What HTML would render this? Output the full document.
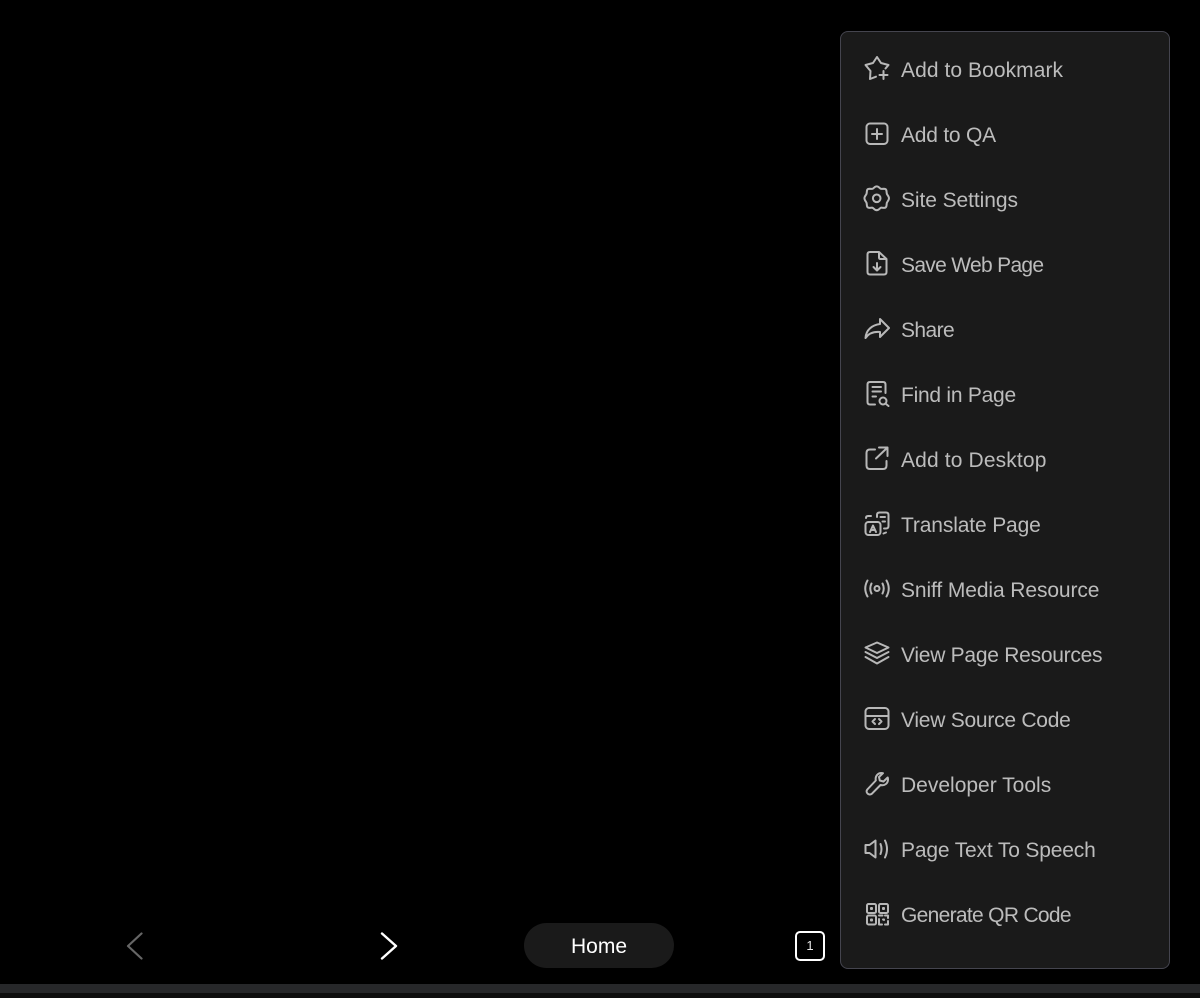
<!DOCTYPE html>
<html>
<head>
<meta charset="utf-8">
<style>
html,body{margin:0;padding:0;background:#000;}
body{position:relative;width:1200px;height:998px;overflow:hidden;font-family:"Liberation Sans",sans-serif;}
.menu{position:absolute;left:840px;top:31px;width:328px;height:936px;background:#1a1a1a;border:1px solid #44444e;border-radius:8px;}
.t{position:absolute;left:901px;color:#bcbcbc;font-size:21px;line-height:28px;height:28px;white-space:nowrap;}
svg.i{position:absolute;left:863px;width:28px;height:28px;fill:none;stroke:#b8b8b8;stroke-width:2;stroke-linecap:round;stroke-linejoin:round;}
.strip{position:absolute;left:0;top:984px;width:1200px;height:9px;background:#27282a;}
.strip2{position:absolute;left:0;top:993px;width:1200px;height:5px;background:#0e0e0e;}
.home{position:absolute;left:524px;top:923px;width:150px;height:45px;border-radius:23px;background:#1a1a1a;color:#fff;font-size:21px;line-height:48px;text-align:center;}
.tab{position:absolute;left:795px;top:931px;width:26px;height:26px;border:2px solid #fff;border-radius:5px;color:#e8e8e8;font-size:13px;line-height:26px;text-align:center;}
</style>
</head>
<body>
<svg style="position:absolute;left:120px;top:928px;width:30px;height:36px" viewBox="0 0 30 36" fill="none" stroke="#666" stroke-width="2.2" stroke-linecap="round" stroke-linejoin="round"><path d="M21.500 5.500 L8 18 L21.500 30.500"/></svg>
<svg style="position:absolute;left:374px;top:928px;width:30px;height:36px" viewBox="0 0 30 36" fill="none" stroke="#fff" stroke-width="2.4" stroke-linecap="round" stroke-linejoin="round"><path d="M8 5.500 L22 18 L8 30.500"/></svg>
<div class="home">Home</div>
<div class="tab">1</div>
<div class="strip"></div>
<div class="strip2"></div>
<div class="menu"></div>

<svg class="i" style="top:54px" viewBox="0 0 28 28"><path d="M13 22.700 L7 25 L7.500 17 L2.500 11 L10 9 L14 3 L18 9 L25.500 11 L22.500 14.500"/><path d="M20.500 17 V25 M16.500 21 H24.500"/></svg>
<div class="t" style="top:57px;letter-spacing:.07px">Add to Bookmark</div>

<svg class="i" style="top:119px" viewBox="0 0 28 28"><rect x="3.500" y="4.500" width="21" height="20.500" rx="3.500"/><path d="M14 10 V20 M9 15 H19"/></svg>
<div class="t" style="top:122px;letter-spacing:-.22px">Add to QA</div>

<svg class="i" style="top:184px" viewBox="0 0 28 28"><path d="M11.600 3.200 Q13.700 1.600 15.800 3.200 L17.200 4.400 Q18 5 19 4.900 L21 4.700 Q23.300 4.700 23.500 7 L23.700 9 Q23.800 10 24.400 10.800 L25.300 12.200 Q26.600 14.300 25.300 16.400 L24.400 17.800 Q23.800 18.600 23.700 19.600 L23.500 21.600 Q23.300 23.900 21 23.900 L19 23.700 Q18 23.600 17.200 24.200 L15.800 25.400 Q13.700 27 11.600 25.400 L10.200 24.200 Q9.400 23.600 8.400 23.700 L6.400 23.900 Q4.100 23.900 3.900 21.600 L3.700 19.600 Q3.600 18.600 3 17.800 L2.100 16.400 Q0.800 14.300 2.100 12.200 L3 10.800 Q3.600 10 3.700 9 L3.900 7 Q4.100 4.700 6.400 4.700 L8.400 4.900 Q9.400 5 10.200 4.400 Z"/><circle cx="13.700" cy="14.300" r="3.800"/></svg>
<div class="t" style="top:187px;letter-spacing:-.08px">Site Settings</div>

<svg class="i" style="top:249px" viewBox="0 0 28 28"><path d="M16 3 H7 Q4.500 3 4.500 5.500 V23 Q4.500 25.500 7 25.500 H21 Q23.500 25.500 23.500 23 V10 L16 3 Z"/><path d="M16 3.500 V8.500 Q16 10 17.500 10 H23"/><path d="M14 14 V21 M10.500 18 L14 21.500 L17.500 18"/></svg>
<div class="t" style="top:252px;letter-spacing:-.69px">Save Web Page</div>

<svg class="i" style="top:314px" viewBox="0 0 28 28"><path d="M17 5 L26 14 L17 23 V18 C11 17.500 6 19 2.500 24 C3 16 9 11 17 10 Z"/></svg>
<div class="t" style="top:317px;letter-spacing:-.6px">Share</div>

<svg class="i" style="top:379px" viewBox="0 0 28 28"><path d="M12 25.500 H7 Q4.500 25.500 4.500 23 V5.500 Q4.500 3 7 3 H20 Q22.500 3 22.500 5.500 V14"/><path d="M9.500 8 H18 M9.500 12.500 H18 M9.500 17.500 H13"/><circle cx="20" cy="22" r="3.500"/><path d="M22.500 24.500 L25.500 27"/></svg>
<div class="t" style="top:382px;letter-spacing:-.25px">Find in Page</div>

<svg class="i" style="top:444px" viewBox="0 0 28 28"><path d="M12 5.500 H7 Q3.500 5.500 3.500 9 V21.500 Q3.500 25 7 25 H20 Q23.500 25 23.500 21.500 V17"/><path d="M13 14.500 L24.500 3.500 M16 3.500 H24.500 V12"/></svg>
<div class="t" style="top:447px;letter-spacing:.14px">Add to Desktop</div>

<svg class="i" style="top:509px" viewBox="0 0 28 28"><rect x="2.500" y="13" width="15" height="13" rx="3"/><path d="M7 23 L10 16.500 L13 23 M8 21 H12"/><path d="M3 9 Q3 7 5 7 H8 M14 8 V6 Q14 3.500 16.500 3.500 H23 Q25.500 3.500 25.500 6 V17 Q25.500 19.500 23 19.500 H21 M17.500 8 H22 M19.500 12.500 H22 M20.500 24.500 L23 23.500"/></svg>
<div class="t" style="top:512px;letter-spacing:-.14px">Translate Page</div>

<svg class="i" style="top:574px" viewBox="0 0 28 28"><circle cx="14" cy="14.500" r="2.500"/><path d="M8.500 9.500 Q6 14.500 8.500 19.500 M19.500 9.500 Q22 14.500 19.500 19.500 M4.500 6.500 Q0 14.500 4.500 22.500 M23.500 6.500 Q28 14.500 23.500 22.500"/></svg>
<div class="t" style="top:577px;letter-spacing:-.1px">Sniff Media Resource</div>

<svg class="i" style="top:639px" viewBox="0 0 28 28"><path d="M14 3.500 L25.500 8.500 L14 14 L2.500 8.500 Z"/><path d="M2.500 13 L14 19 L25.500 13 M2.500 18 L14 24.500 L25.500 18"/></svg>
<div class="t" style="top:642px;letter-spacing:-.26px">View Page Resources</div>

<svg class="i" style="top:704px" viewBox="0 0 28 28"><rect x="2.500" y="4" width="23" height="21" rx="3.500"/><path d="M3 12 H25 M12 15 L9.500 17.500 L12 20 M16 15 L18.500 17.500 L16 20"/></svg>
<div class="t" style="top:707px;letter-spacing:-.25px">View Source Code</div>

<svg class="i" style="top:769px" viewBox="0 0 28 28"><path d="M18.500 4 C14.500 4 12 7.500 12.800 11.500 L4.300 20.500 C2 23.500 6 27 8.800 24.800 L17.500 16 C21.500 17 25 14.500 25 10.500 C25 9.800 25 9 24.700 8.500 L20.500 12.500 L16.800 11.500 L16 8 L20 4.200 C19.500 4 19 4 18.500 4 Z"/></svg>
<div class="t" style="top:772px">Developer Tools</div>

<svg class="i" style="top:834px" viewBox="0 0 28 28"><path d="M2.500 11 H6.500 L12.500 6.500 V23.500 L6.500 19 H2.500 Z"/><path d="M17.500 10 Q19.500 15 17.500 20 M22 6.500 Q26 15 22 23.500"/></svg>
<div class="t" style="top:837px;letter-spacing:-.16px">Page Text To Speech</div>

<svg class="i" style="top:899px" viewBox="0 0 28 28"><rect x="4" y="5" width="9" height="9" rx="1.500"/><rect x="16" y="5" width="9" height="9" rx="1.500"/><rect x="4" y="16.500" width="9" height="9" rx="1.500"/><path d="M8 9 H9 V10 H8 Z M20 9 H21 V10 H20 Z M8 20.500 H9 V21.500 H8 Z M16 16.500 H19.500 M22 16.500 H25 V19 M16 20 V25.500 H19 M20 20.500 H21 V21 M25 22 V25.500 H22"/></svg>
<div class="t" style="top:902px;letter-spacing:-.69px">Generate QR Code</div>
</body>
</html>
